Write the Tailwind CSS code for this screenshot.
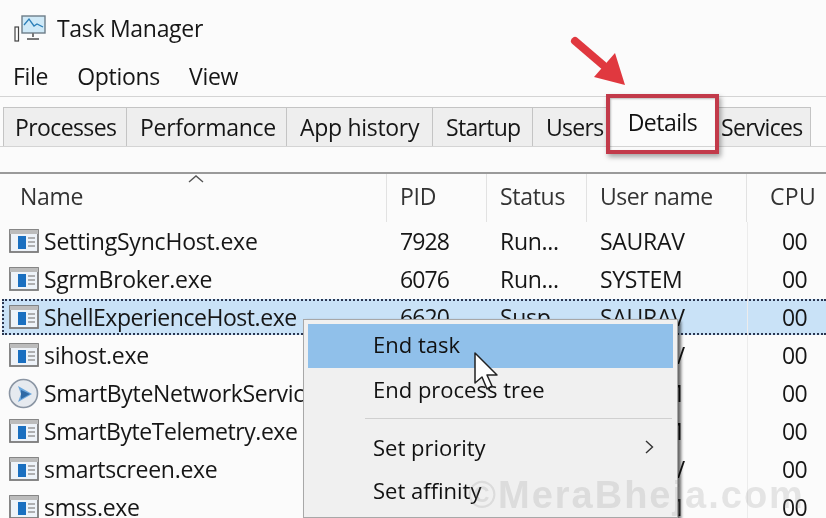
<!DOCTYPE html>
<html><head><meta charset="utf-8">
<script src="https://cdn.jsdelivr.net/npm/@tailwindcss/browser@4"></script>
</head>
<body class="m-0 overflow-hidden bg-white">
<div class="relative w-[826px] h-[518px] overflow-hidden bg-[#fbfbfb] text-[#161616] font-['Open_Sans','Noto_Sans',sans-serif] text-[23px] leading-[30px] tracking-[-0.3px] blur-[0.4px]">
  <!-- title -->
  <div class="h-[52px] flex items-center pl-[14px] gap-[11px] pt-[3px]">
    <svg width="32" height="28" viewBox="0 0 32 28">
      <rect x="1" y="13" width="3.500" height="14" fill="#fff" stroke="#444" stroke-width="1.200"/>
      <rect x="8" y="2" width="23" height="17" fill="#cfe9f7" stroke="#6d7d88" stroke-width="1.400"/>
      <path d="M10 11 L15 5 L20 12 L23 10 L29 13" fill="none" stroke="#2c7fb8" stroke-width="1.300"/>
      <path d="M19 19v4M13 25h12" stroke="#777" stroke-width="2"/>
    </svg>
    <span>Task Manager</span>
  </div>
  <!-- menu -->
  <div class="h-[44px] flex items-center pl-[13px] gap-[29px] pt-[3px]"><span>File</span><span>Options</span><span>View</span></div>
  <!-- tabs -->
  <div class="h-[50px] border-t border-[#d4d4d4] pt-[10px]">
    <div class="h-[40px] border-b border-[#d4d4d4] flex pl-[3px]">
      <div class="w-[124px] h-[39px] border-t border-l border-r border-[#c4c4c4] bg-[#eeeeee] flex items-center pl-[11px] tracking-[-0.6px]">Processes</div>
      <div class="w-[160px] h-[39px] border-t border-r border-[#c4c4c4] bg-[#eeeeee] flex items-center pl-[13px]">Performance</div>
      <div class="w-[146px] h-[39px] border-t border-r border-[#c4c4c4] bg-[#eeeeee] flex items-center pl-[13px]">App history</div>
      <div class="w-[100px] h-[39px] border-t border-r border-[#c4c4c4] bg-[#eeeeee] flex items-center pl-[13px] tracking-[-0.7px]">Startup</div>
      <div class="w-[74px] h-[39px] border-t border-[#c4c4c4] bg-[#eeeeee] flex items-center pl-[13px] tracking-[-0.7px]">Users</div>
      <div class="w-[108px] h-[39px] bg-[#fbfbfb]"></div>
      <div class="w-[96px] h-[39px] border-t border-r border-[#c4c4c4] bg-[#eeeeee] flex items-center pl-[6px] tracking-[-0.7px]">Services</div>
    </div>
  </div>
  <div class="h-[26px]"></div>
  <!-- table header -->
  <div class="grid grid-cols-[387px_100px_100px_160px_79px] h-[50px] border-t-2 border-[#9a9a9a]">
    <div class="relative border-r border-[#e2e2e2] flex items-center pl-[20px] text-[#333] pb-[4px]">Name
      <svg class="absolute left-[187px] top-0" width="18" height="10" viewBox="0 0 18 10"><path d="M2 8 L9 2 L16 8" fill="none" stroke="#555" stroke-width="1.400"/></svg>
    </div>
    <div class="border-r border-[#e2e2e2] flex items-center pl-[13px] text-[#333] pb-[4px]">PID</div>
    <div class="border-r border-[#e2e2e2] flex items-center pl-[13px] text-[#333] pb-[4px]">Status</div>
    <div class="border-r border-[#e2e2e2] flex items-center pl-[13px] text-[#333] pb-[4px] tracking-[-0.5px]">User name</div>
    <div class="flex items-center pl-[23px] text-[#333] pb-[4px] tracking-[0.3px]">CPU</div>
  </div>
  <!-- rows -->
  <div class="flex flex-col">
    <div class="grid grid-cols-[387px_100px_100px_160px_79px] h-[38px] items-center">
      <div class="flex items-center gap-[5px] pl-[9px]"><svg width="30" height="24" viewBox="0 0 30 24"><rect x="1" y="1" width="28" height="22" fill="#eef3f9" stroke="#7a7a7a" stroke-width="1.800"/><rect x="1" y="1" width="28" height="4" fill="#bcbcbc"/><rect x="9" y="7" width="8" height="13" fill="#1a6fc0"/><path d="M19 9h7M19 13h7M19 17h7" stroke="#999" stroke-width="1.300"/></svg><span class="tracking-[-0.2px]">SettingSyncHost.exe</span></div>
      <div class="pl-[13px] tracking-[-0.9px]">7928</div><div class="pl-[13px]">Run...</div><div class="pl-[13px]">SAURAV</div><div class="pl-[35px] tracking-[-0.6px]">00</div>
    </div>
    <div class="grid grid-cols-[387px_100px_100px_160px_79px] h-[38px] items-center">
      <div class="flex items-center gap-[5px] pl-[9px]"><svg width="30" height="24" viewBox="0 0 30 24"><rect x="1" y="1" width="28" height="22" fill="#eef3f9" stroke="#7a7a7a" stroke-width="1.800"/><rect x="1" y="1" width="28" height="4" fill="#bcbcbc"/><rect x="9" y="7" width="8" height="13" fill="#1a6fc0"/><path d="M19 9h7M19 13h7M19 17h7" stroke="#999" stroke-width="1.300"/></svg><span>SgrmBroker.exe</span></div>
      <div class="pl-[13px] tracking-[-0.9px]">6076</div><div class="pl-[13px]">Run...</div><div class="pl-[13px]">SYSTEM</div><div class="pl-[35px] tracking-[-0.6px]">00</div>
    </div>
    <div class="h-[38px] py-[1px] pl-[2px]">
      <div class="grid grid-cols-[383px_100px_100px_160px_79px] h-[36px] items-center bg-[#c9e2f7] border-y-2 border-l-2 border-dotted border-[#2b3650]">
        <div class="flex items-center gap-[5px] pl-[5px]"><svg width="30" height="24" viewBox="0 0 30 24"><rect x="1" y="1" width="28" height="22" fill="#eef3f9" stroke="#7a7a7a" stroke-width="1.800"/><rect x="1" y="1" width="28" height="4" fill="#bcbcbc"/><rect x="9" y="7" width="8" height="13" fill="#1a6fc0"/><path d="M19 9h7M19 13h7M19 17h7" stroke="#999" stroke-width="1.300"/></svg><span class="tracking-[-0.45px]">ShellExperienceHost.exe</span></div>
        <div class="pl-[13px] tracking-[-0.9px]">6620</div><div class="pl-[13px]">Susp...</div><div class="pl-[13px]">SAURAV</div><div class="pl-[35px] tracking-[-0.6px]">00</div>
      </div>
    </div>
    <div class="grid grid-cols-[387px_100px_100px_160px_79px] h-[38px] items-center">
      <div class="flex items-center gap-[5px] pl-[9px]"><svg width="30" height="24" viewBox="0 0 30 24"><rect x="1" y="1" width="28" height="22" fill="#eef3f9" stroke="#7a7a7a" stroke-width="1.800"/><rect x="1" y="1" width="28" height="4" fill="#bcbcbc"/><rect x="9" y="7" width="8" height="13" fill="#1a6fc0"/><path d="M19 9h7M19 13h7M19 17h7" stroke="#999" stroke-width="1.300"/></svg><span>sihost.exe</span></div>
      <div></div><div></div><div class="pl-[13px]">SAURAV</div><div class="pl-[35px] tracking-[-0.6px]">00</div>
    </div>
    <div class="grid grid-cols-[387px_100px_100px_160px_79px] h-[38px] items-center">
      <div class="flex items-center gap-[5px] pl-[8px] overflow-hidden"><svg class="shrink-0" width="31" height="31" viewBox="0 0 31 31"><circle cx="15.500" cy="15.500" r="14" fill="#e6eaef" stroke="#8a95a3" stroke-width="1.600"/><path d="M10 8 L24 16 L10 24 L13 16 Z" fill="#6aa6dc"/><path d="M13 12 L22 16 L13 21 Z" fill="#2f6aa6"/></svg><span class="whitespace-nowrap">SmartByteNetworkService.exe</span></div>
      <div></div><div></div><div class="pl-[13px]">SYSTEM</div><div class="pl-[35px] tracking-[-0.6px]">00</div>
    </div>
    <div class="grid grid-cols-[387px_100px_100px_160px_79px] h-[38px] items-center">
      <div class="flex items-center gap-[5px] pl-[9px]"><svg width="30" height="24" viewBox="0 0 30 24"><rect x="1" y="1" width="28" height="22" fill="#eef3f9" stroke="#7a7a7a" stroke-width="1.800"/><rect x="1" y="1" width="28" height="4" fill="#bcbcbc"/><rect x="9" y="7" width="8" height="13" fill="#1a6fc0"/><path d="M19 9h7M19 13h7M19 17h7" stroke="#999" stroke-width="1.300"/></svg><span class="tracking-[-0.45px]">SmartByteTelemetry.exe</span></div>
      <div></div><div></div><div class="pl-[13px]">SYSTEM</div><div class="pl-[35px] tracking-[-0.6px]">00</div>
    </div>
    <div class="grid grid-cols-[387px_100px_100px_160px_79px] h-[38px] items-center">
      <div class="flex items-center gap-[5px] pl-[9px]"><svg width="30" height="24" viewBox="0 0 30 24"><rect x="1" y="1" width="28" height="22" fill="#eef3f9" stroke="#7a7a7a" stroke-width="1.800"/><rect x="1" y="1" width="28" height="4" fill="#bcbcbc"/><rect x="9" y="7" width="8" height="13" fill="#1a6fc0"/><path d="M19 9h7M19 13h7M19 17h7" stroke="#999" stroke-width="1.300"/></svg><span>smartscreen.exe</span></div>
      <div></div><div></div><div class="pl-[13px]">SAURAV</div><div class="pl-[35px] tracking-[-0.6px]">00</div>
    </div>
    <div class="grid grid-cols-[387px_100px_100px_160px_79px] h-[38px] items-center">
      <div class="flex items-center gap-[5px] pl-[9px]"><svg width="30" height="24" viewBox="0 0 30 24"><rect x="1" y="1" width="28" height="22" fill="#eef3f9" stroke="#7a7a7a" stroke-width="1.800"/><rect x="1" y="1" width="28" height="4" fill="#bcbcbc"/><rect x="9" y="7" width="8" height="13" fill="#1a6fc0"/><path d="M19 9h7M19 13h7M19 17h7" stroke="#999" stroke-width="1.300"/></svg><span>smss.exe</span></div>
      <div></div><div></div><div class="pl-[13px]">SYSTEM</div><div class="pl-[35px] tracking-[-0.6px]">00</div>
    </div>
  </div>
  <!-- column separator running through the rows -->
  <div class="absolute left-[747px] top-[222px] w-px h-[296px] bg-[#ececec]"></div>

  <!-- Details tab + red highlight -->
  <div class="absolute left-[606px] top-[94px] w-[113px] h-[60px] border-[4px] border-[#c23a4a] shadow-[2px_3px_5px_rgba(0,0,0,0.35),inset_1px_1px_2px_rgba(0,0,0,0.25)] flex items-center justify-center pb-[5px] text-[#111] tracking-[-0.5px]">Details</div>

  <!-- arrow -->
  <svg class="absolute left-[565px] top-[33px]" width="66" height="56" viewBox="0 0 66 56"><path d="M10 8 L38 32" stroke="#e0383f" stroke-width="8" stroke-linecap="round"/><path d="M29 44 L60 52 L50 20 Z" fill="#e0383f"/></svg>

  <!-- context menu -->
  <div class="absolute left-[303px] top-[319px] w-[375px] h-[199px] bg-[#f0f0f0] border border-[#a8a8a8] shadow-[3px_2px_3px_rgba(0,0,0,0.6)] pt-[4px] px-[4px] text-[#111] text-[22px] tracking-normal">
    <div class="h-[44px] bg-[#90c0ea] pl-[65px] flex items-center pb-[4px]">End task</div>
    <div class="h-[44px] pl-[65px] flex items-center pb-[2px]">End process tree</div>
    <div class="ml-[57px] mr-px h-px bg-[#d0d0d0] mt-[6px]"></div>
    <div class="h-[44px] mt-[6px] pl-[65px] pr-[18px] flex items-center justify-between"><span>Set priority</span><svg width="12" height="16" viewBox="0 0 12 16"><path d="M3 2 L9.500 8 L3 14" fill="none" stroke="#333" stroke-width="1.400"/></svg></div>
    <div class="h-[44px] -mt-px pl-[65px] flex items-center">Set affinity</div>
  </div>

  <!-- cursor -->
  <svg class="absolute left-[472px] top-[351px]" width="30" height="42" viewBox="0 0 30 42"><path d="M3 2 L3 32 L10 26 L15 38 L20 35 L15 24 L25 24 Z" fill="#fff" stroke="#222" stroke-width="1.500" stroke-linejoin="round"/></svg>

  <!-- watermark -->
  <div class="absolute left-[468px] top-[473px] whitespace-nowrap font-['Liberation_Sans',sans-serif] font-bold text-[38px] leading-[44px] tracking-[2px] text-[#8a8a8a]/20">©MeraBheja.com</div>
</div>
</body></html>
